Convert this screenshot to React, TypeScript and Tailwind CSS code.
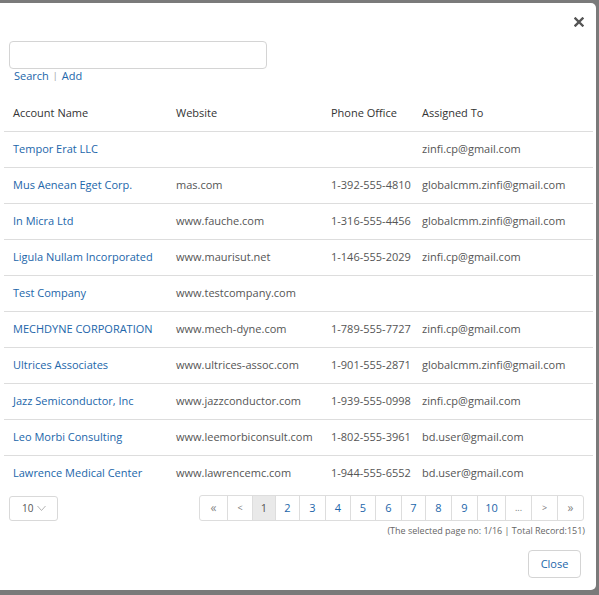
import React from "react";

type Row = { name: string; site: string; phone: string; owner: string };

const rows: Row[] = [
  { name: "Tempor Erat LLC", site: "", phone: "", owner: "zinfi.cp@gmail.com" },
  { name: "Mus Aenean Eget Corp.", site: "mas.com", phone: "1-392-555-4810", owner: "globalcmm.zinfi@gmail.com" },
  { name: "In Micra Ltd", site: "www.fauche.com", phone: "1-316-555-4456", owner: "globalcmm.zinfi@gmail.com" },
  { name: "Ligula Nullam Incorporated", site: "www.maurisut.net", phone: "1-146-555-2029", owner: "zinfi.cp@gmail.com" },
  { name: "Test Company", site: "www.testcompany.com", phone: "", owner: "" },
  { name: "MECHDYNE CORPORATION", site: "www.mech-dyne.com", phone: "1-789-555-7727", owner: "zinfi.cp@gmail.com" },
  { name: "Ultrices Associates", site: "www.ultrices-assoc.com", phone: "1-901-555-2871", owner: "globalcmm.zinfi@gmail.com" },
  { name: "Jazz Semiconductor, Inc", site: "www.jazzconductor.com", phone: "1-939-555-0998", owner: "zinfi.cp@gmail.com" },
  { name: "Leo Morbi Consulting", site: "www.leemorbiconsult.com", phone: "1-802-555-3961", owner: "bd.user@gmail.com" },
  { name: "Lawrence Medical Center", site: "www.lawrencemc.com", phone: "1-944-555-6552", owner: "bd.user@gmail.com" },
];

type Page = { label: string; w: string; kind: "nav" | "active" | "num" | "small" };

const pages: Page[] = [
  { label: "«", w: "w-[27px]", kind: "nav" },
  { label: "<", w: "w-[25px]", kind: "small" },
  { label: "1", w: "w-[23px]", kind: "active" },
  { label: "2", w: "w-[24px]", kind: "num" },
  { label: "3", w: "w-[26px]", kind: "num" },
  { label: "4", w: "w-[25px]", kind: "num" },
  { label: "5", w: "w-[25px]", kind: "num" },
  { label: "6", w: "w-[26px]", kind: "num" },
  { label: "7", w: "w-[24px]", kind: "num" },
  { label: "8", w: "w-[26px]", kind: "num" },
  { label: "9", w: "w-[26px]", kind: "num" },
  { label: "10", w: "w-[28px]", kind: "num" },
  { label: "...", w: "w-[26px]", kind: "small" },
  { label: ">", w: "w-[26px]", kind: "small" },
  { label: "»", w: "w-[26px]", kind: "nav" },
];

const kindClass: Record<Page["kind"], string> = {
  nav: "text-[#888] text-[12px]",
  small: "text-[#777] text-[9px]",
  active: "bg-[#e9e9e9] text-[#555]",
  num: "text-[#2266aa]",
};

const grid = "grid grid-cols-[163px_155px_91px_1fr] items-center";

export default function App() {
  return (
    <div
      className="w-[599px] h-[595px] bg-[#7a7a7a] pt-[3px] pr-[3px] pb-[5px]"
      style={{ fontFamily: '"Open Sans", "Liberation Sans", sans-serif' }}
    >
      <div className="relative h-full w-[596px] bg-white rounded-r-[5px] flex flex-col text-[11px]">
        {/* close icon */}
        <button className="absolute right-[12px] top-[14px] w-[10px] h-[10px] flex items-center justify-center">
          <svg width="10" height="10" viewBox="0 0 10 10">
            <path d="M1.5 1.5 L8.5 8.5 M8.5 1.5 L1.5 8.5" stroke="#555" strokeWidth="2.4" strokeLinecap="square" />
          </svg>
        </button>

        {/* search */}
        <div className="ml-[9px] mt-[38px] w-[258px] h-[28px] border border-[#d4d4d4] rounded-[4px]" />
        <div className="ml-[14px] leading-[14px] h-[14px] flex items-center text-[#2266aa]">
          <span>Search</span>
          <span className="mx-[4px] text-[#999] text-[9px]">|</span>
          <span>Add</span>
        </div>

        {/* table */}
        <div className="ml-[4px] mr-[3px] mt-[13px]">
          <div className={`${grid} h-[36px] border-b border-[#dddddd] text-[#333]`}>
            <div className="pl-[9px]">Account Name</div>
            <div className="pl-[9px]">Website</div>
            <div className="pl-[9px]">Phone Office</div>
            <div className="pl-[9px]">Assigned To</div>
          </div>
          {rows.map((r, i) => (
            <div
              key={r.name}
              className={`${grid} h-[36px] ${i < rows.length - 1 ? "border-b border-[#dddddd]" : "pb-[1px]"}`}
            >
              <div className="pl-[9px] text-[#2266aa] whitespace-nowrap">{r.name}</div>
              <div className="pl-[9px] text-[#555] whitespace-nowrap">{r.site}</div>
              <div className="pl-[9px] text-[#555] whitespace-nowrap">{r.phone}</div>
              <div className="pl-[9px] text-[#555] whitespace-nowrap">{r.owner}</div>
            </div>
          ))}
        </div>

        {/* pagination */}
        <div className="mt-[3px] flex items-center justify-between ml-[9px] mr-[12px]">
          <div className="w-[49px] h-[25px] border border-[#d9d9d9] rounded-[3px] flex items-center pl-[12px] gap-[4px] text-[#555] text-[10px]">
            <span>10</span>
            <svg width="9" height="7" viewBox="0 0 9 7">
              <path d="M0.5 1 L4.5 5.5 L8.5 1" fill="none" stroke="#aaa" strokeWidth="0.9" />
            </svg>
          </div>
          <div className="flex h-[26px] border border-[#dddddd] rounded-[3px] overflow-hidden">
            {pages.map((p, i) => (
              <div
                key={i}
                className={`flex items-center justify-center ${p.w} ${i > 0 ? "border-l border-[#dddddd]" : ""} ${kindClass[p.kind]}`}
              >
                {p.label}
              </div>
            ))}
          </div>
        </div>
        <div className="mt-[3px] mr-[11px] text-right leading-[14px] text-[9px] text-[#666]">
          (The selected page no: 1/16 | Total Record:151)
        </div>
        <div className="mt-[12px] mr-[15px] flex justify-end">
          <button className="w-[53px] h-[28px] border border-[#d4d4d4] rounded-[4px] text-[#2266aa] text-[11px]">
            Close
          </button>
        </div>
      </div>
    </div>
  );
}
